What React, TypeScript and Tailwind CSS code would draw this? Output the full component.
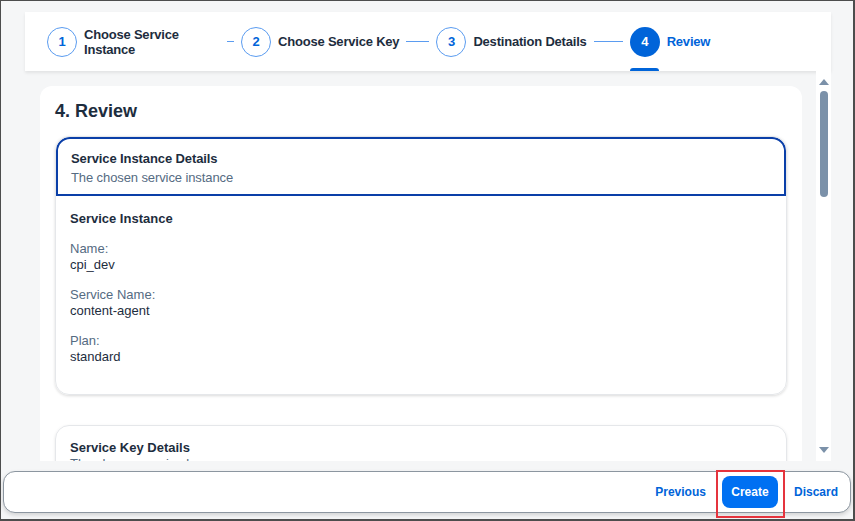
import React from "react";

const font = { fontFamily: '"Liberation Sans", Arial, sans-serif' };

function Circle({ n, active }: { n: number; active?: boolean }) {
  return (
    <div
      className={`w-[30px] h-[30px] shrink-0 rounded-full flex items-center justify-center text-[13px] ${
        active ? "bg-[#0064d9] text-white font-bold" : "border border-[#5b9cf0] text-[#0064d9]"
      }`}
    >
      {n}
    </div>
  );
}

function Line({ w }: { w: string }) {
  return <div className={`h-px bg-[#5b9cf0] shrink-0 ${w}`} />;
}

function Field({ label, value }: { label: string; value: string }) {
  return (
    <div className="mb-[14px] text-[13px] leading-[16px]">
      <div className="text-[#556b82]">{label}</div>
      <div className="text-[#1d2d3e]">{value}</div>
    </div>
  );
}

export default function App() {
  return (
    <div
      style={font}
      className="w-[855px] h-[521px] bg-[#f5f6f7] border-l border-t border-r-2 border-b-2 border-[#4d4d4d] flex flex-col overflow-hidden"
    >
      {/* Wizard header */}
      <div className="pl-[24px] pr-[22px] pt-[11px]">
        <div className="h-[59px] bg-white shadow-[0_2px_3px_rgba(0,0,0,0.08)] flex items-center pl-[22px] gap-[7px] text-[13px] font-bold tracking-[-0.2px] text-[#1d2d3e]">
          <Circle n={1} />
          <div className="w-[136px] leading-[15px]">
            Choose Service
            <br />
            Instance
          </div>
          <Line w="w-[7px]" />
          <Circle n={2} />
          <div>Choose Service Key</div>
          <Line w="w-[23px]" />
          <Circle n={3} />
          <div>Destination Details</div>
          <Line w="w-[29px]" />
          <div className="relative self-stretch flex items-center">
            <Circle n={4} active />
            <div className="absolute left-0 bottom-0 w-[29px] h-[3px] rounded-t bg-[#0064d9]" />
          </div>
          <div className="text-[#0064d9]">Review</div>
        </div>
      </div>

      {/* Scrollable content */}
      <div className="flex-1 min-h-0 flex pl-[24px] pr-[22px]">
        <div className="flex-1 min-w-0 overflow-hidden pl-[15px] pr-[14px] pt-[15px]">
          <div className="bg-white rounded-[12px] px-[15px] pt-[15px] pb-6">
            <h2 className="text-[18px] font-bold text-[#1d2d3e] leading-[20px] mb-[15px]">4. Review</h2>

            <div className="rounded-[14px] border border-[#e5e7ea] shadow-[0_1px_3px_rgba(0,0,0,0.15)] overflow-hidden">
              <div className="border-2 border-[#0a3fa8] rounded-t-[14px] px-[13px] pt-[10px] pb-[7px] text-[13px] leading-[19px] tracking-[-0.1px]">
                <div className="font-bold text-[#1d2d3e]">Service Instance Details</div>
                <div className="text-[#556b82]">The chosen service instance</div>
              </div>
              <div className="px-[14px] pt-[15px] pb-[15px]">
                <div className="text-[13px] font-bold text-[#1d2d3e] leading-[16px] mb-[14px]">Service Instance</div>
                <Field label="Name:" value="cpi_dev" />
                <Field label="Service Name:" value="content-agent" />
                <Field label="Plan:" value="standard" />
              </div>
            </div>

            <div className="mt-[30px] rounded-[14px] border border-[#e5e7ea] shadow-[0_1px_3px_rgba(0,0,0,0.1)] px-[14px] pt-[14px] pb-4 text-[13px] leading-[16px]">
              <div className="font-bold text-[#1d2d3e]">Service Key Details</div>
              <div className="text-[#556b82]">The chosen service key</div>
            </div>
          </div>
        </div>

        {/* Scrollbar */}
        <div className="w-[15px] bg-white flex flex-col items-center pt-[8px] pb-[8px]">
          <div className="w-0 h-0 border-l-[5px] border-r-[5px] border-b-[6px] border-l-transparent border-r-transparent border-b-[#7b91a9]" />
          <div className="mt-[6px] w-[8px] h-[106px] rounded-full bg-[#7b91a9]" />
          <div className="flex-1" />
          <div className="w-0 h-0 border-l-[5px] border-r-[5px] border-t-[6px] border-l-transparent border-r-transparent border-t-[#7b91a9]" />
        </div>
      </div>

      {/* Footer */}
      <div className="mx-[2px] mt-[10px] mb-[6px] h-[42px] bg-white border border-[#8c96a0] rounded-[12px] shadow-[0_2px_4px_rgba(0,0,0,0.15)] flex items-center justify-end pr-[12px] text-[12px] font-bold">
        <button className="text-[#0064d9] h-[32px]">Previous</button>
        <div className="relative ml-[16px]">
          <button className="bg-[#0070f2] text-white rounded-[8px] h-[32px] w-[56px]">Create</button>
          <div className="absolute -left-[6px] -top-[6px] w-[69px] h-[48px] border-2 border-[#e5343d]" />
        </div>
        <button className="text-[#0064d9] ml-[16px] h-[32px]">Discard</button>
      </div>
    </div>
  );
}
